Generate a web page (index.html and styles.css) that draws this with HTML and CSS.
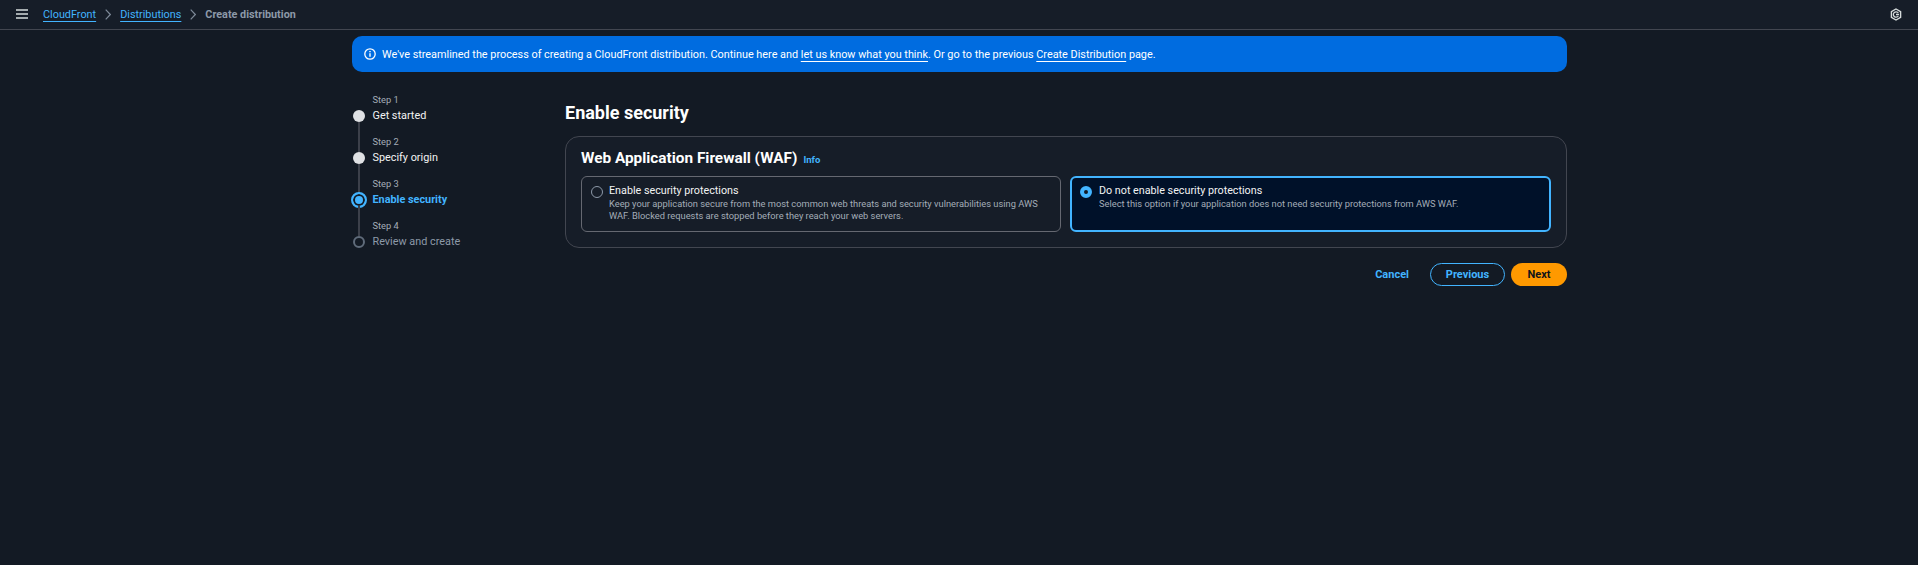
FILE: index.html
```html
<!DOCTYPE html>
<html lang="en">
<head>
<meta charset="utf-8">
<title>Create distribution</title>
<link rel="stylesheet" href="styles.css">
</head>
<body>
<header class="topbar">
  <svg class="menu-icon" width="12" height="10" viewBox="0 0 12 10"><path d="M0 1h12M0 5h12M0 9h12" stroke="#d5dbdb" stroke-width="1.6" fill="none"/></svg>
  <nav class="crumbs">
    <a class="crumb-link" href="#">CloudFront</a>
    <svg class="chev" width="6" height="11" viewBox="0 0 6 11"><path d="M.7 .7l4.6 4.8-4.6 4.8" stroke="#7d8998" stroke-width="1.2" fill="none"/></svg>
    <a class="crumb-link" href="#">Distributions</a>
    <svg class="chev" width="6" height="11" viewBox="0 0 6 11"><path d="M.7 .7l4.6 4.8-4.6 4.8" stroke="#7d8998" stroke-width="1.2" fill="none"/></svg>
    <span class="crumb-current">Create distribution</span>
  </nav>
  <svg class="settings-icon" width="12" height="13" viewBox="0 0 12 13"><path d="M6 1l4.6 2.7v5.6L6 12 1.4 9.3V3.7z" stroke="#d5dbdb" stroke-width="1.4" fill="none"/><path d="M8.3 5A2.7 2.7 0 1 0 8.3 8M6 6.5h3" stroke="#d5dbdb" stroke-width="1.3" fill="none"/></svg>
</header>
<main class="page">
  <div class="banner">
    <svg class="info-icon" width="12" height="12" viewBox="0 0 12 12"><circle cx="6" cy="6" r="5.2" stroke="#fff" stroke-width="1.3" fill="none"/><path d="M6 5.2v3.6M6 3v1.3" stroke="#fff" stroke-width="1.4" fill="none"/></svg>
    <p class="banner-text">We've streamlined the process of creating a CloudFront distribution. Continue here and <a href="#">let us know what you think</a>. Or go to the previous <a href="#">Create Distribution</a> page.</p>
  </div>
  <div class="wizard">
    <ol class="steps">
      <li class="step done"><small>Step 1</small><span>Get started</span></li>
      <li class="step done"><small>Step 2</small><span>Specify origin</span></li>
      <li class="step active"><small>Step 3</small><span>Enable security</span></li>
      <li class="step todo"><small>Step 4</small><span>Review and create</span></li>
    </ol>
    <section class="content">
      <h1 class="title">Enable security</h1>
      <div class="card">
        <h2 class="card-title">Web Application Firewall (WAF) <a class="info" href="#">Info</a></h2>
        <div class="tiles">
          <label class="tile">
            <span class="radio"></span>
            <span class="tile-body"><strong>Enable security protections</strong><small>Keep your application secure from the most common web threats and security vulnerabilities using AWS WAF. Blocked requests are stopped before they reach your web servers.</small></span>
          </label>
          <label class="tile selected">
            <span class="radio"></span>
            <span class="tile-body"><strong>Do not enable security protections</strong><small>Select this option if your application does not need security protections from AWS WAF.</small></span>
          </label>
        </div>
      </div>
      <div class="actions">
        <a class="btn-link" href="#">Cancel</a>
        <button class="btn btn-normal" type="button">Previous</button>
        <button class="btn btn-primary" type="button">Next</button>
      </div>
    </section>
  </div>
</main>
</body>
</html>
```
FILE: styles.css
```css
*, *::before, *::after { box-sizing: border-box; }
html, body { margin: 0; height: 100%; }
body {
  background: #131a24;
  color: #f2f3f3;
  font-family: Roboto, "Noto Sans", sans-serif;
  font-size: 11px;
  overflow: hidden;
}
a { color: inherit; }
.topbar {
  height: 30px;
  display: flex;
  align-items: center;
  padding: 0 16px 1px 16px;
  background: #161d28;
  border-bottom: 1px solid #424650;
}
.menu-icon { flex: none; }
.crumbs {
  display: flex;
  align-items: center;
  gap: 9px;
  margin-left: 15px;
  flex: 1;
  font-size: 10.85px;
}
.crumb-link { color: #42b4ff; text-decoration: underline; text-underline-offset: 3px; }
.crumb-current { color: #8d99a8; font-weight: 700; font-size: 10.8px; }
.page { width: 1215px; margin: 6px auto 0 352px; }
.banner {
  height: 36px;
  background: #006ce0;
  border-radius: 10px;
  display: flex;
  align-items: center;
  padding: 0 12px;
  gap: 6px;
  color: #fff;
}
.banner-text { margin: 0; font-size: 10.85px; }
.banner-text a { text-decoration: underline; text-underline-offset: 3px; }
.wizard { display: flex; margin-top: 21px; }
.steps {
  list-style: none;
  margin: 0;
  padding: 0;
  width: 213px;
  flex: none;
}
.step {
  position: relative;
  height: 42px;
  padding-left: 20.5px;
  display: flex;
  flex-direction: column;
  justify-content: flex-start;
  font-size: 10.85px;
  line-height: 15px;
  color: #f2f3f3;
}
.step small { font-size: 9.3px; line-height: 14px; margin-bottom: 1px; color: #a4adb8; }
.step::before {
  content: "";
  position: absolute;
  left: 1px;
  top: 17px;
  width: 12px;
  height: 12px;
  border-radius: 50%;
  background: #dfe1e4;
}
.step::after {
  content: "";
  position: absolute;
  left: 6px;
  top: 29px;
  width: 2px;
  height: 30px;
  background: #3c404a;
}
.step.active { color: #42b4ff; font-weight: 700; }
.step.active small { font-weight: 400; color: #a4adb8; }
.step.active::before {
  left: -1px;
  top: 15px;
  width: 16px;
  height: 16px;
  background: #42b4ff;
  border: 2px solid #42b4ff;
  box-shadow: inset 0 0 0 2px #131a24;
}
.step.todo { color: #8d99a8; }
.step.todo::before {
  background: transparent;
  border: 2px solid #5f6b7a;
}
.step.todo::after { display: none; }
.content { flex: 1; }
.title {
  margin: 8px 0 11px;
  font-size: 18px;
  line-height: 24px;
  font-weight: 700;
  color: #fff;
}
.card {
  height: 112px;
  padding: 11px 15px;
  background: #161d28;
  border: 1px solid #424650;
  border-radius: 14px;
}
.card-title {
  display: flex;
  align-items: baseline;
  gap: 6px;
  margin: 0 0 8px;
  font-size: 15.35px;
  line-height: 20px;
  font-weight: 700;
  color: #fff;
}
.info { font-size: 9.5px; line-height: 10px; color: #42b4ff; text-decoration: none; }
.tiles { display: grid; grid-template-columns: 480px 481px; gap: 9px; }
.tile {
  height: 56px;
  display: flex;
  gap: 6px;
  padding: 6px 9px;
  border: 1px solid #656871;
  border-radius: 6px;
}
.radio {
  flex: none;
  width: 12px;
  height: 12px;
  margin-top: 3px;
  border-radius: 50%;
  border: 1px solid #8d99a8;
}
.tile-body { display: flex; flex-direction: column; }
.tile-body strong { font-size: 10.75px; line-height: 15px; font-weight: 400; color: #f2f3f3; }
.tile-body small { font-size: 9.3px; line-height: 12px; color: #a4adb8; }
.tile.selected { background: #001129; border: 2px solid #42b4ff; padding: 5px 8px; gap: 7px; }
.tile.selected .radio { border: 4px solid #42b4ff; background: #131a24; }
.actions { display: flex; justify-content: flex-end; align-items: center; margin-top: 15px; }
.btn-link { color: #42b4ff; font-weight: 700; text-decoration: none; font-size: 11px; margin-right: 21px; }
.btn {
  height: 23px;
  border-radius: 12px;
  font-family: inherit;
  font-size: 11px;
  font-weight: 700;
  padding: 0;
}
.btn-normal { width: 75px; background: transparent; border: 1px solid #42b4ff; color: #42b4ff; margin-right: 6px; }
.btn-primary { width: 56px; background: #ff9900; border: none; color: #0f141a; }
```
